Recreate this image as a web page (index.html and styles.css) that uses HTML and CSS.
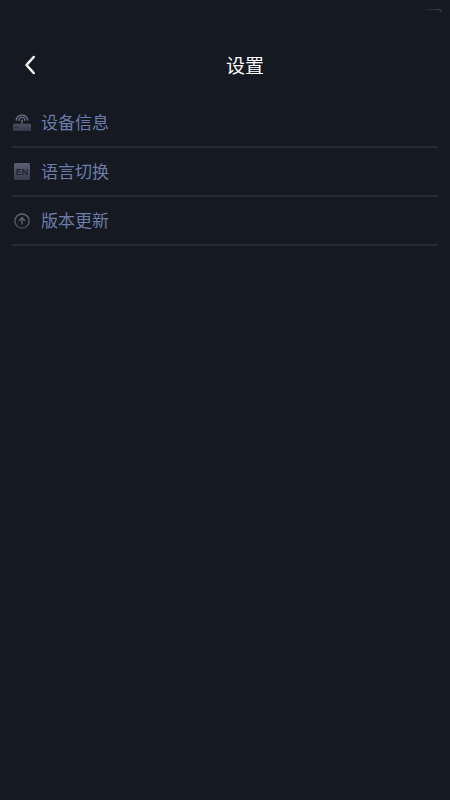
FILE: index.html
```html
<!DOCTYPE html>
<html lang="zh-CN">
<head>
<meta charset="utf-8">
<meta name="viewport" content="width=device-width, initial-scale=1">
<title>设置</title>
<link rel="stylesheet" href="styles.css">
</head>
<body>
<div class="status-bar">
  <svg class="battery" width="26" height="8" viewBox="0 0 26 8" aria-hidden="true">
    <defs>
      <linearGradient id="edge" x1="0" x2="1" y1="0" y2="0">
        <stop offset="0" stop-color="#3a404b" stop-opacity="0"/>
        <stop offset="1" stop-color="#3a404b"/>
      </linearGradient>
    </defs>
    <path d="M2 1.5 L21 1.6 Q23 1.6 23.4 4" fill="none" stroke="url(#edge)" stroke-width="1.2"/>
  </svg>
</div>
<header class="header">
  <button class="back" type="button" aria-label="返回">
    <svg width="12" height="20" viewBox="0 0 12 20" aria-hidden="true">
      <path d="M9.7 2 L2.5 10 L9.7 18" fill="none" stroke="#fff" stroke-width="2.5" stroke-linecap="round" stroke-linejoin="round"/>
    </svg>
  </button>
  <h1 class="title">设置</h1>
</header>
<main>
  <ul class="menu">
    <li class="item">
      <a class="link" href="#device">
        <svg class="icon" width="20" height="21" viewBox="0 0 20 21" aria-hidden="true">
          <defs>
            <linearGradient id="router" x1="0" x2="0" y1="0" y2="1">
              <stop offset="0" stop-color="#4a5063"/>
              <stop offset="1" stop-color="#363b49"/>
            </linearGradient>
          </defs>
          <path d="M4.2 8 A5.9 5.9 0 0 1 15.8 8 M7 8.4 A3 3 0 0 1 13 8.4" fill="none" stroke="#646a7e" stroke-width="1.4" stroke-linecap="round"/>
          <circle cx="10" cy="8.6" r="1" fill="#646a7e"/>
          <path d="M10 8.6 V12" stroke="#565c70" stroke-width="1.5"/>
          <rect x="1" y="11.7" width="18" height="7.3" rx="1" fill="url(#router)"/>
          <path d="M3 15.3 h1.5 M5.5 15.3 h1.5" stroke="#20242f" stroke-width="1.1"/>
        </svg>
        <span>设备信息</span>
      </a>
    </li>
    <li class="item">
      <a class="link" href="#language">
        <svg class="icon" width="20" height="21" viewBox="0 0 20 21" aria-hidden="true">
          <defs>
            <linearGradient id="tile" x1="0" x2="0" y1="0" y2="1">
              <stop offset="0" stop-color="#5b6175"/>
              <stop offset="1" stop-color="#383d4b"/>
            </linearGradient>
          </defs>
          <rect x="2" y="2" width="16" height="17" rx="1.5" fill="url(#tile)"/>
          <text class="icon-label" x="10" y="14" text-anchor="middle">EN</text>
        </svg>
        <span>语言切换</span>
      </a>
    </li>
    <li class="item">
      <a class="link" href="#update">
        <svg class="icon" width="20" height="21" viewBox="0 0 20 21" aria-hidden="true">
          <defs>
            <linearGradient id="ring" gradientUnits="userSpaceOnUse" x1="0" x2="0" y1="3" y2="19">
              <stop offset="0" stop-color="#646979"/>
              <stop offset="1" stop-color="#424755"/>
            </linearGradient>
          </defs>
          <g fill="none" stroke="url(#ring)">
            <circle cx="10" cy="11" r="7.1" stroke-width="1.5"/>
            <path d="M6.9 10.9 L10 7.9 L13.1 10.9 M10 8.2 L10.01 14.4" stroke-width="1.7"/>
          </g>
        </svg>
        <span>版本更新</span>
      </a>
    </li>
  </ul>
</main>
</body>
</html>
```
FILE: styles.css
```css
* {
  box-sizing: border-box;
}

body {
  margin: 0;
  min-height: 100vh;
  background: #151921;
  color: #fff;
  font-family: "Noto Sans CJK SC", sans-serif;
}

.status-bar {
  display: flex;
  justify-content: flex-end;
  height: 31px;
  padding: 8px 6px 0 0;
}

.header {
  display: flex;
  align-items: center;
  height: 68px;
}

.back {
  display: flex;
  align-items: center;
  justify-content: flex-end;
  width: 40px;
  height: 40px;
  padding: 0 4px 0 0;
  border: 0;
  background: none;
}

.title {
  flex: 1;
  margin: 0;
  font-size: 19px;
  font-weight: 400;
  line-height: 26px;
  text-align: center;
}

.menu {
  margin: 0;
  padding: 0 12px;
  list-style: none;
}

.item {
  border-bottom: 2px solid #262a33;
}

.link {
  display: flex;
  align-items: flex-start;
  gap: 9px;
  padding: 13px 0;
  color: #6c7ca8;
  font-size: 17px;
  line-height: 20px;
  text-decoration: none;
}

.icon {
  flex: none;
}

.icon-label {
  fill: #20242f;
  font-family: "Liberation Sans", sans-serif;
  font-size: 9px;
  font-weight: 700;
}
```
